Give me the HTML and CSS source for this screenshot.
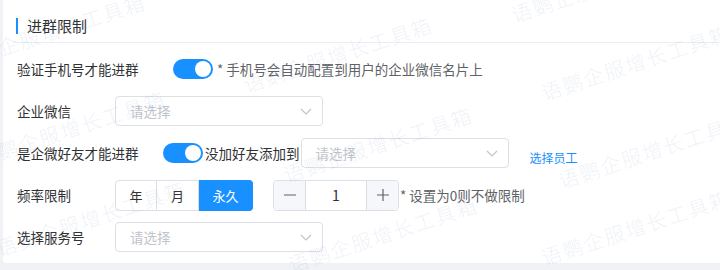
FILE: index.html
```html
<!DOCTYPE html>
<html lang="zh-CN">
<head>
    <meta charset="UTF-8">
    <meta name="viewport" content="width=device-width, initial-scale=1.0">
    <title>进群限制</title>
    <link rel="stylesheet" href="styles.css">
</head>
<body>
    <div class="card">
        <div class="card-header">
            <span class="title">进群限制</span>
        </div>

        <div class="form">
            <div class="form-row">
                <label class="label label-wide">验证手机号才能进群</label>
                <span class="switch on"><span class="knob"></span></span>
                <span class="hint hint-switch">* 手机号会自动配置到用户的企业微信名片上</span>
            </div>

            <div class="form-row">
                <label class="label">企业微信</label>
                <div class="select">
                    <span class="placeholder">请选择</span>
                    <svg class="arrow" width="12" height="7" viewBox="0 0 12 7"><polyline points="1,1 6,6 11,1" fill="none" stroke="#c0c4cc" stroke-width="1.2"/></svg>
                </div>
            </div>

            <div class="form-row">
                <label class="label label-mid">是企微好友才能进群</label>
                <span class="switch on"><span class="knob"></span></span>
                <span class="text-after">没加好友添加到</span>
                <div class="select">
                    <span class="placeholder">请选择</span>
                    <svg class="arrow" width="12" height="7" viewBox="0 0 12 7"><polyline points="1,1 6,6 11,1" fill="none" stroke="#c0c4cc" stroke-width="1.2"/></svg>
                </div>
                <a class="link">选择员工</a>
            </div>

            <div class="form-row">
                <label class="label">频率限制</label>
                <div class="radio-group">
                    <span class="radio-btn">年</span>
                    <span class="radio-btn">月</span>
                    <span class="radio-btn active">永久</span>
                </div>
                <div class="number-input">
                    <span class="num-btn">
                        <svg width="12" height="12" viewBox="0 0 12 12"><line x1="0" y1="6" x2="12" y2="6" stroke="#606266" stroke-width="1.2"/></svg>
                    </span>
                    <span class="num-value">1</span>
                    <span class="num-btn plus">
                        <svg width="12" height="12" viewBox="0 0 12 12"><line x1="0" y1="6" x2="12" y2="6" stroke="#606266" stroke-width="1.2"/><line x1="6" y1="0" x2="6" y2="12" stroke="#606266" stroke-width="1.2"/></svg>
                    </span>
                </div>
                <span class="hint">* 设置为0则不做限制</span>
            </div>

            <div class="form-row">
                <label class="label">选择服务号</label>
                <div class="select">
                    <span class="placeholder">请选择</span>
                    <svg class="arrow" width="12" height="7" viewBox="0 0 12 7"><polyline points="1,1 6,6 11,1" fill="none" stroke="#c0c4cc" stroke-width="1.2"/></svg>
                </div>
            </div>
        </div>
    </div>

    <!-- watermark layer -->
    <div class="watermark">
        <span class="wm wm1">语鹦企服增长工具箱</span>
        <span class="wm wm2">语鹦企服增长工具箱</span>
        <span class="wm wm3">语鹦企服增长工具箱</span>
        <span class="wm wm4">语鹦企服增长工具箱</span>
        <span class="wm wm5">语鹦企服增长工具箱</span>
        <span class="wm wm6">语鹦企服增长工具箱</span>
        <span class="wm wm7">语鹦企服增长工具箱</span>
        <span class="wm wm8">语鹦企服增长工具箱</span>
        <span class="wm wm9">语鹦企服增长工具箱</span>
        <span class="wm wm10">语鹦企服增长工具箱</span>
    </div>
</body>
</html>
```

FILE: styles.css
```css
body {
    margin: 0;
    background: #f0f2f5;
    font-family: "Noto Sans CJK SC", "Noto Sans", sans-serif;
    color: #303133;
    font-size: 13.5px;
    overflow: hidden;
}

.card {
    margin-left: 3px;
    height: 263px;
    background: #fff;
    border-bottom-left-radius: 4px;
}

.card-header {
    margin-left: 10px;
    height: 42px;
    border-bottom: 1px solid #ebeef5;
    display: flex;
    align-items: center;
    padding-left: 3px;
}

.title {
    font-size: 15px;
    border-left: 2px solid #1890ff;
    padding-left: 9px;
    line-height: 16px;
    margin-top: 10px;
}

.form {
    padding: 11px 0 0 14px;
    display: flex;
    flex-direction: column;
    gap: 12px;
}

.form-row {
    height: 30px;
    display: flex;
    align-items: center;
}

.label {
    width: 98px;
    flex-shrink: 0;
}
.label-wide { width: 156px; }
.label-mid { width: 146px; }

.switch {
    width: 40px;
    height: 20px;
    border-radius: 10px;
    background: #dcdfe6;
    position: relative;
    flex-shrink: 0;
}
.switch.on {
    background: #1890ff;
}
.switch .knob {
    position: absolute;
    top: 2px;
    left: 2px;
    width: 16px;
    height: 16px;
    border-radius: 50%;
    background: #fff;
}
.switch.on .knob {
    left: 22px;
}

.hint {
    color: #606266;
    margin-left: 1px;
}
.hint-switch {
    margin-left: 4px;
}

.text-after {
    margin-left: 2px;
    margin-right: 1px;
}

.select {
    width: 208px;
    height: 30px;
    box-sizing: border-box;
    border: 1px solid #dcdfe6;
    border-radius: 4px;
    display: flex;
    align-items: center;
    justify-content: space-between;
    padding: 0 10px 0 14px;
    background: #fff;
}
.placeholder {
    color: #c0c4cc;
}

.link {
    color: #1890ff;
    font-size: 12px;
    margin-left: 21px;
    margin-top: 8px;
}

.radio-group {
    display: flex;
    height: 31px;
}
.radio-btn {
    width: 42px;
    box-sizing: border-box;
    border: 1px solid #dcdfe6;
    border-left: none;
    display: flex;
    align-items: center;
    justify-content: center;
    font-size: 13px;
    background: #fff;
}
.radio-btn:first-child {
    border-left: 1px solid #dcdfe6;
    border-radius: 4px 0 0 4px;
}
.radio-btn.active {
    width: 54px;
    background: #1890ff;
    border-color: #1890ff;
    color: #fff;
    border-radius: 0 4px 4px 0;
}

.number-input {
    margin-left: 20px;
    width: 126px;
    height: 31px;
    box-sizing: border-box;
    border: 1px solid #dcdfe6;
    border-radius: 4px;
    display: flex;
    overflow: hidden;
}
.num-btn {
    width: 31px;
    background: #f5f7fa;
    border-right: 1px solid #dcdfe6;
    display: flex;
    align-items: center;
    justify-content: center;
}
.num-btn.plus {
    border-right: none;
    border-left: 1px solid #dcdfe6;
}
.num-value {
    flex: 1;
    display: flex;
    align-items: center;
    justify-content: center;
    font-size: 14px;
}

.watermark {
    position: fixed;
    inset: 0;
    pointer-events: none;
    overflow: hidden;
}
.wm {
    position: absolute;
    white-space: nowrap;
    font-size: 20px;
    font-weight: 300;
    letter-spacing: 2px;
    color: rgba(120, 145, 190, 0.13);
    transform: translate(-50%, -50%) rotate(-18deg);
}
.wm1 { left: 51px; top: 31px; }
.wm2 { left: 338px; top: 54px; }
.wm3 { left: 606px; top: -16px; }
.wm4 { left: 71px; top: 128px; }
.wm5 { left: 378px; top: 144px; }
.wm6 { left: 636px; top: 62px; }
.wm7 { left: 91px; top: 218px; }
.wm8 { left: 383px; top: 234px; }
.wm9 { left: 653px; top: 150px; }
.wm10 { left: 636px; top: 227px; }
```
